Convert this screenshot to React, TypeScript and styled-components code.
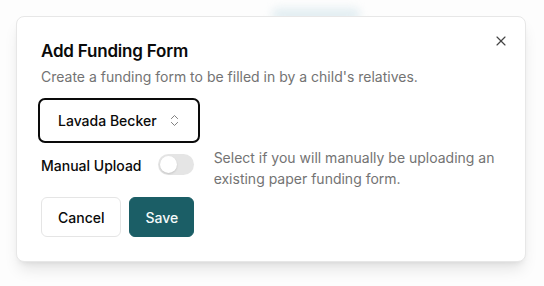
import styled, { createGlobalStyle } from 'styled-components'
import { X, ChevronsUpDown } from 'lucide-react'

const GlobalStyle = createGlobalStyle`
  html, body {
    margin: 0;
    padding: 0;
    background: #ffffff;
    font-family: Inter, "Noto Sans", sans-serif;
    color: #0a0a0a;
  }
  * { box-sizing: border-box; }
`

const Backdrop = styled.div`
  position: relative;
  width: 544px;
  height: 286px;
  padding: 16px 18px 0 16px;
  background: #fdfdfd;
  overflow: hidden;
`

const Blur = styled.div`
  position: absolute;
  left: 272px;
  top: 8px;
  width: 88px;
  height: 14px;
  border-radius: 6px;
  background: #e3eef2;
  filter: blur(4px);
`

const Dialog = styled.div`
  position: relative;
  width: 510px;
  height: 246px;
  padding: 22px 24px 0 24px;
  background: #ffffff;
  border: 1px solid #e7e7e7;
  border-radius: 8px;
  box-shadow: 0 10px 15px -3px rgba(0, 0, 0, 0.1), 0 4px 6px -4px rgba(0, 0, 0, 0.1);
  display: flex;
  flex-direction: column;
  & > * { flex-shrink: 0; }
`

const Close = styled.button`
  position: absolute;
  top: 16px;
  right: 16px;
  padding: 0;
  border: none;
  background: none;
  color: #444;
  display: flex;
  cursor: pointer;
`

const Title = styled.h2`
  margin: 0;
  font-size: 17px;
  font-weight: 600;
  line-height: 24px;
  letter-spacing: -0.2px;
`

const Description = styled.p`
  margin: 4px 0 0;
  font-size: 14px;
  line-height: 20px;
  color: #737373;
`

const SelectButton = styled.button`
  margin: 11px 0 0 -3px;
  align-self: flex-start;
  width: 162px;
  height: 45px;
  padding: 0 0 0 18px;
  display: flex;
  align-items: center;
  gap: 10px;
  border: 2px solid #0a0a0a;
  border-radius: 7px;
  background: #fff;
  font-family: inherit;
  font-size: 14px;
  font-weight: 500;
  color: #0a0a0a;
  svg { color: #777; }
`

const Row = styled.div`
  margin-top: 4px;
  display: flex;
  align-items: flex-start;
`

const Label = styled.span`
  font-size: 14px;
  font-weight: 500;
  line-height: 20px;
  margin-top: 9px;
  width: 118px;
`

const Switch = styled.span`
  margin-top: 7px;
  width: 36px;
  height: 21px;
  border-radius: 11px;
  background: #e5e5e5;
  padding: 2px;
  display: flex;
`

const Thumb = styled.span`
  width: 17px;
  height: 17px;
  border-radius: 50%;
  background: #fff;
  box-shadow: 0 1px 2px rgba(0, 0, 0, 0.15);
`

const Hint = styled.p`
  margin: 0 0 0 20px;
  font-size: 14px;
  line-height: 21px;
  color: #737373;
  width: 290px;
`

const Actions = styled.div`
  margin-top: 8px;
  display: flex;
  gap: 8px;
`

const Button = styled.button<{ $primary?: boolean }>`
  height: 40px;
  padding: 0 ${p => (p.$primary ? 15 : 16)}px;
  border-radius: 6px;
  font-family: inherit;
  font-size: 14px;
  font-weight: 500;
  border: 1px solid ${p => (p.$primary ? '#1b5e66' : '#e5e5e5')};
  background: ${p => (p.$primary ? '#1b5e66' : '#ffffff')};
  color: ${p => (p.$primary ? '#f5fafa' : '#0a0a0a')};
`

export default function App() {
  return (
    <>
      <GlobalStyle />
      <Backdrop>
        <Blur />
        <Dialog>
          <Close aria-label="Close">
            <X size={16} strokeWidth={1.75} />
          </Close>
          <Title>Add Funding Form</Title>
          <Description>Create a funding form to be filled in by a child's relatives.</Description>
          <SelectButton>
            Lavada Becker
            <ChevronsUpDown size={15} strokeWidth={1.5} />
          </SelectButton>
          <Row>
            <Label>Manual Upload</Label>
            <Switch>
              <Thumb />
            </Switch>
            <Hint>Select if you will manually be uploading an existing paper funding form.</Hint>
          </Row>
          <Actions>
            <Button>Cancel</Button>
            <Button $primary>Save</Button>
          </Actions>
        </Dialog>
      </Backdrop>
    </>
  )
}
